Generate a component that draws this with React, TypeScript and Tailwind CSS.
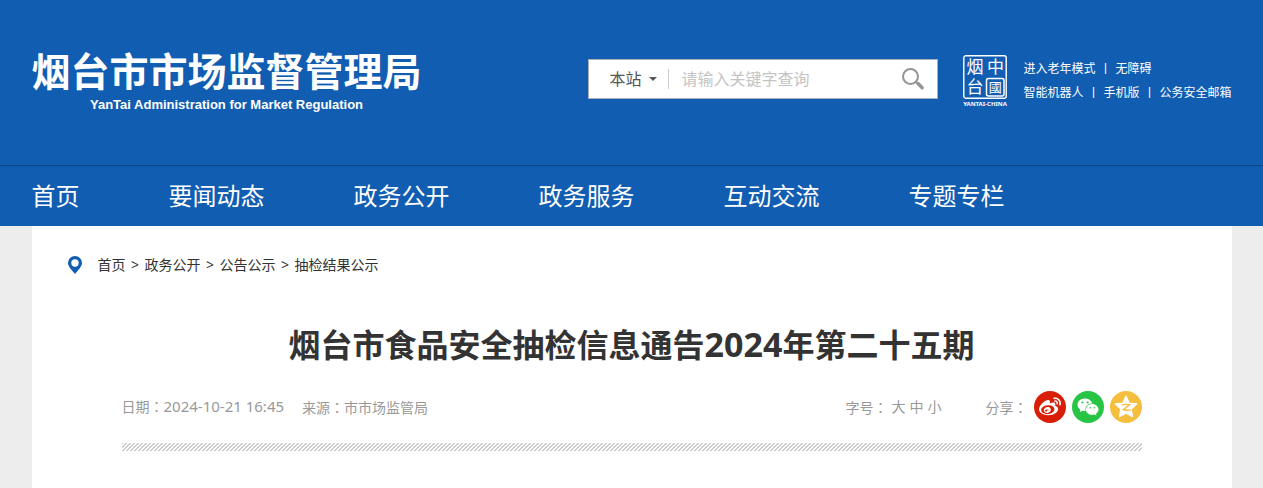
import { FaWeibo, FaWeixin } from 'react-icons/fa6'

const navLinks = ['首页', '要闻动态', '政务公开', '政务服务', '互动交流', '专题专栏']

const crumbs = ['首页', '政务公开', '公告公示', '抽检结果公示']

const toolLinks = [
  ['进入老年模式', '无障碍'],
  ['智能机器人', '手机版', '公务安全邮箱'],
]

function Seal() {
  return (
    <svg className="h-[52px] w-[44px] shrink-0 overflow-visible" viewBox="0 0 44 52" fill="none" role="img" aria-label="中国烟台">
      <rect x="0.8" y="0.8" width="42.4" height="42.4" rx="2" stroke="white" strokeWidth="1.4" />
      <rect x="23.5" y="23.5" width="17.5" height="17.5" rx="2" stroke="white" strokeWidth="1.5" />
      <g fill="white" fontFamily="'Noto Sans CJK SC', sans-serif" textAnchor="middle">
        <text x="12" y="18" fontSize="17">烟</text>
        <text x="32.5" y="18" fontSize="17">中</text>
        <text x="12" y="38" fontSize="17">台</text>
        <text x="32.2" y="37" fontSize="13">國</text>
      </g>
      <text x="22" y="51" fill="white" fontSize="6" fontWeight="700" textAnchor="middle" fontFamily="'Noto Sans', sans-serif">
        YANTAI-CHINA
      </text>
    </svg>
  )
}

function SearchBox() {
  return (
    <form className="mb-1 flex h-10 w-[350px] shrink-0 items-center border border-[#a9b0b8] bg-white" onSubmit={(e) => e.preventDefault()}>
      <div className="relative ml-5 flex items-center">
        <select aria-label="搜索范围" className="w-12 appearance-none bg-transparent text-base text-[#555] outline-none">
          <option>本站</option>
        </select>
        <svg className="pointer-events-none absolute left-10 h-1 w-2" viewBox="0 0 8 4" fill="#555">
          <path d="M0 0h8L4 4z" />
        </svg>
      </div>
      <span className="ml-[11px] h-5 w-px bg-[#ccc]" />
      <input
        type="text"
        aria-label="关键字"
        placeholder="请输入关键字查询"
        className="ml-3 min-w-0 flex-1 text-base outline-none placeholder:text-[#c4c4c4]"
      />
      <button type="submit" aria-label="搜索" className="mr-3 cursor-pointer">
        <svg className="h-6 w-6" viewBox="0 0 24 24" fill="none" stroke="#949494">
          <circle cx="9.5" cy="9.5" r="7.5" strokeWidth="2" />
          <path d="M15 15l1.5 1.5" strokeWidth="2" />
          <path d="M17 16.5l4.2 4.2" strokeWidth="3.4" strokeLinecap="round" />
        </svg>
      </button>
    </form>
  )
}

function Header() {
  return (
    <header className="bg-[#115db1] text-white">
      <div className="mx-auto flex h-[165px] max-w-[1200px] items-center">
        <a href="#" className="flex flex-col items-center">
          <span className="text-[39px] leading-10 font-bold">烟台市市场监督管理局</span>
          <span className="mt-1 font-['Liberation_Sans'] text-[13px] leading-5 font-bold">YanTai Administration for Market Regulation</span>
        </a>
        <div className="ml-auto flex items-center pb-1">
          <SearchBox />
          <div className="ml-[25px] flex items-center gap-4">
            <Seal />
            <div className="text-xs leading-6">
              {toolLinks.map((row) => (
                <div key={row[0]} className="flex whitespace-nowrap">
                  {row.map((label, i) => (
                    <span key={label}>
                      {i > 0 && <span className="px-1">丨</span>}
                      <a href="#">{label}</a>
                    </span>
                  ))}
                </div>
              ))}
            </div>
          </div>
        </div>
      </div>
      <nav className="border-t border-[#0e4582]">
        <div className="mx-auto flex h-[60px] max-w-[1200px] items-center gap-[89px] text-2xl">
          {navLinks.map((label) => (
            <a key={label} href="#" className="whitespace-nowrap">
              {label}
            </a>
          ))}
        </div>
      </nav>
    </header>
  )
}

// the TC face centres the full-width colon in its box
function Label({ text }: { text: string }) {
  return (
    <span>
      {text}
      <span className="font-['Noto_Sans_CJK_TC',sans-serif]">：</span>
    </span>
  )
}

function Share() {
  return (
    <div className="flex items-center gap-[6px]">
      <Label text="分享" />
      <button aria-label="微博" className="flex size-8 items-center justify-center rounded-full bg-[#d81e06] text-white">
        <FaWeibo className="size-[22px]" />
      </button>
      <button aria-label="微信" className="flex size-8 items-center justify-center rounded-full bg-[#28c445] text-white">
        <FaWeixin className="size-[22px]" />
      </button>
      <button aria-label="QQ空间" className="flex size-8 items-center justify-center rounded-full bg-[#f6be3f] text-white">
        <svg className="size-6" viewBox="0 0 22 22">
          <path
            d="M11 1l3 6.3 7 .8-5.2 4.9 1.3 7-6.1-3.3L4.9 20l1.3-7L1 8.1l7-.8z"
            fill="white"
            stroke="white"
            strokeLinejoin="round"
          />
          <path d="M7 9q4-.8 7.5-.2l-6 4.7q3.5.8 7 .2" fill="none" stroke="#f6be3f" strokeWidth="1.2" />
        </svg>
      </button>
    </div>
  )
}

export default function App() {
  return (
    <div className="min-h-screen bg-[#ededed] font-['Noto_Sans','Noto_Sans_CJK_SC',sans-serif]">
      <Header />
      <main className="mx-auto min-h-[262px] max-w-[1200px] bg-white">
        <nav aria-label="当前位置" className="flex items-center px-9 pt-[29px] text-sm text-[#333]">
          <svg className="mr-4 h-[18px] w-[14px]" viewBox="0 0 14 18" fill="#115db1">
            <path fillRule="evenodd" d="M7 0a7 7 0 0 1 7 7c0 3-3 6.5-7 11C3 13.5 0 10 0 7a7 7 0 0 1 7-7zm0 3.3a3.7 3.7 0 1 0 0 7.4 3.7 3.7 0 0 0 0-7.4z" />
          </svg>
          {crumbs.map((label, i) => (
            <span key={label} className="flex">
              {i > 0 && <span className="w-[19px] text-center">&gt;</span>}
              <a href="#">{label}</a>
            </span>
          ))}
        </nav>

        <article className="mx-[90px] mt-12">
          <h1 className="text-center text-[32px] leading-[42px] font-bold text-[#333]">
            烟台市食品安全抽检信息通告<span className="text-[34px]">2024</span>年第二十五期
          </h1>
          <div className="mt-[25px] flex h-8 items-center text-sm text-[#999]">
            <span>
              <Label text="日期" />
              <time className="text-[15px]">2024-10-21 16:45</time>
            </span>
            <span className="ml-[18px]">
              <Label text="来源" />
              市市场监管局
            </span>
            <div className="ml-auto flex items-center gap-1">
              <Label text="字号" />
              <button>大</button>
              <button>中</button>
              <button>小</button>
            </div>
            <div className="ml-11">
              <Share />
            </div>
          </div>
          <div className="mt-5 h-2 bg-[linear-gradient(135deg,#ccc_12.5%,#fff_12.5%_37.5%,#ccc_37.5%_62.5%,#fff_62.5%_87.5%,#ccc_87.5%)] bg-size-[4px_4px]" />
        </article>
      </main>
    </div>
  )
}
